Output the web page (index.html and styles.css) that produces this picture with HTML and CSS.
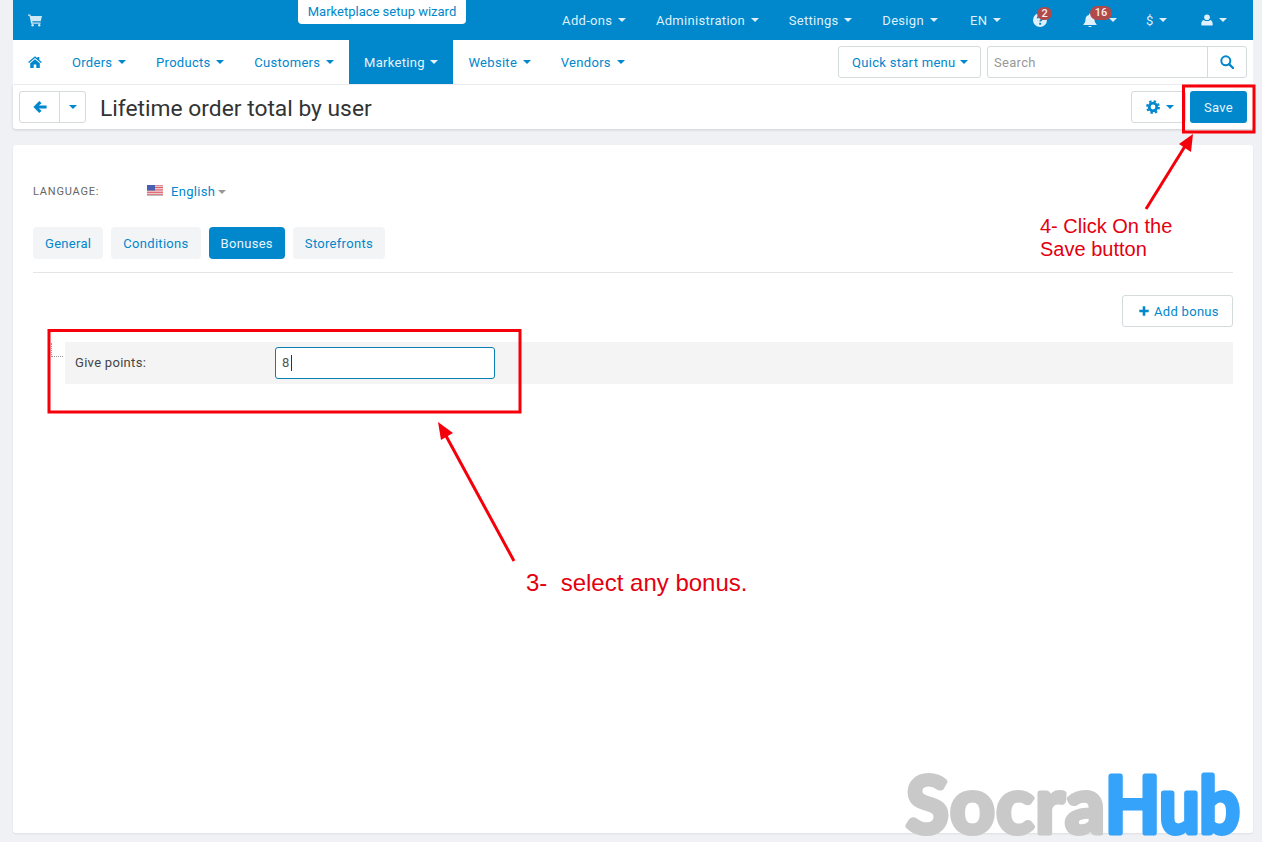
FILE: index.html
```html
<!DOCTYPE html>
<html lang="en">
<head>
<meta charset="utf-8">
<title>Lifetime order total by user</title>
<link rel="stylesheet" href="styles.css">
</head>
<body>
<div class="shell">
  <header class="topbar">
    <a class="top-item cart"><svg class="ico" viewBox="0 0 14 14"><path d="M0 1.500h2.400l.4 1.400H14l-1.300 5.400H4.300l.3 1.200h8v1.200H3.200L1.500 2.700H0z"/><circle cx="4.600" cy="12.200" r="1.200"/><circle cx="11.200" cy="12.200" r="1.200"/></svg></a>
    <a class="wizard">Marketplace setup wizard</a>
    <nav class="top-right">
      <a class="top-item">Add-ons<i class="caret"></i></a>
      <a class="top-item">Administration<i class="caret"></i></a>
      <a class="top-item">Settings<i class="caret"></i></a>
      <a class="top-item">Design<i class="caret"></i></a>
      <a class="top-item locale">EN<i class="caret"></i></a>
      <a class="top-item help"><svg class="ico" viewBox="0 0 14 14"><circle cx="7" cy="7" r="7"/><path d="M4.600 5.400C4.800 3.900 5.800 3.200 7.100 3.200c1.400 0 2.400.8 2.400 2 0 1.900-2.300 1.800-2.300 3.400" fill="none" stroke="#0087cc" stroke-width="1.700"/><rect x="6.200" y="9.800" width="2" height="1.900" fill="#0087cc"/></svg><span class="badge one">2</span></a>
      <a class="top-item bell"><svg class="ico" viewBox="0 0 14 14"><path d="M7 .5c.6 0 1 .4 1 1v.4c2.300.5 3.500 2.200 3.500 4.400 0 2.900 1 3.900 2 4.900v.8H.5v-.8c1-1 2-2 2-4.900C2.500 4.100 3.700 2.400 6 1.900v-.4c0-.6.4-1 1-1z"/><path d="M5.300 13h3.400c0 .8-.8 1.200-1.700 1.200S5.300 13.800 5.300 13z"/></svg><i class="caret"></i><span class="badge two">16</span></a>
      <a class="top-item">$<i class="caret"></i></a>
      <a class="top-item user"><svg class="ico" viewBox="0 0 14 14"><circle cx="7" cy="3.800" r="3.300"/><path d="M1.500 13.500c-.8 0-1.200-.5-1.200-1.300 0-3 1-5 3-5.300C4.200 7.900 5.500 8.300 7 8.300s2.800-.4 3.700-1.400c2 .3 3 2.300 3 5.300 0 .8-.4 1.300-1.200 1.300z"/></svg><i class="caret"></i></a>
    </nav>
  </header>

  <nav class="mainnav">
    <a class="nav-item"><svg class="ico" viewBox="0 0 14 14"><path d="M7 1.300 .2 7l.8 1L7 3l6 5 .8-1L11.300 4.900V2H9.400v1.300z"/><path d="M2.200 8.200V13h3.500V9.400h2.600V13h3.500V8.200L7 4.200z"/></svg></a>
    <a class="nav-item">Orders<i class="caret"></i></a>
    <a class="nav-item">Products<i class="caret"></i></a>
    <a class="nav-item">Customers<i class="caret"></i></a>
    <a class="nav-item active">Marketing<i class="caret"></i></a>
    <a class="nav-item">Website<i class="caret"></i></a>
    <a class="nav-item">Vendors<i class="caret"></i></a>
    <a class="btn quick">Quick start menu<i class="caret tight"></i></a>
    <div class="search">
      <span class="search-field">Search</span>
      <span class="search-btn"><svg class="ico" viewBox="0 0 14 14"><circle cx="5.800" cy="5.800" r="4.500" fill="none" stroke="#0087cc" stroke-width="2"/><path d="M9 9l4 4" stroke="#0087cc" stroke-width="2.400" stroke-linecap="round"/></svg></span>
    </div>
  </nav>

  <section class="pagehead">
    <div class="backgroup">
      <a class="back"><svg class="ico" viewBox="0 0 14 14"><path d="M.4 7 6.300.9 8.600 3.200 5.800 5.600h7.800v2.800H5.800l2.800 2.400-2.300 2.300z"/></svg></a>
      <a class="back-more"><i class="caret"></i></a>
    </div>
    <h1>Lifetime order total by user</h1>
    <a class="btn gear"><svg class="ico" viewBox="0 0 14 14"><circle cx="7" cy="7" r="3.800" fill="none" stroke="#0087cc" stroke-width="2.800"/><circle cx="7" cy="7" r="5.900" fill="none" stroke="#0087cc" stroke-width="2" stroke-dasharray="2.400 2.233"/></svg><i class="caret"></i></a>
    <a class="btn-save">Save</a>
  </section>

  <main class="card">
    <div class="lang">
      <span class="lang-label">LANGUAGE:</span>
      <svg class="flag" viewBox="0 0 16 11"><rect width="16" height="11" fill="#f3f3f6"/><path d="M0 .8h16M0 2.500h16M0 4.200h16M0 5.900h16M0 7.600h16M0 9.300h16" stroke="#d8505a" stroke-width=".9"/><rect width="8" height="5.500" fill="#4a5fb0"/><rect y="10.400" width="16" height=".6" fill="#999"/></svg>
      <a class="lang-name">English<i class="caret grey"></i></a>
    </div>
    <div class="tabs">
      <a class="tab">General</a>
      <a class="tab">Conditions</a>
      <a class="tab on">Bonuses</a>
      <a class="tab">Storefronts</a>
    </div>
    <div class="toolbar"><a class="btn add"><svg class="ico" viewBox="0 0 14 14"><path d="M5.500 1.500h3v4h4v3h-4v4h-3v-4h-4v-3h4z"/></svg>Add bonus</a></div>
    <div class="tree">
      <div class="bonus-row">
        <label class="bonus-label">Give points:</label>
        <div class="bonus-input">8<span class="text-caret"></span></div>
      </div>
    </div>
  </main>
</div>

<svg class="overlay" viewBox="0 0 1262 842">
  <g class="marks">
    <rect x="1183.500" y="86" width="70.500" height="46"/>
    <rect x="49" y="330.500" width="471" height="81.500"/>
    <path d="M1146 209 1187 143"/>
    <path d="M514 561 445 434"/>
  </g>
  <path class="head" d="M1193 134 1191 152 1179 144z"/>
  <path class="head" d="M438 422 453 433 441 440z"/>
  <text class="note" x="1040" y="233">4- Click On the</text>
  <text class="note" x="1040" y="256">Save button</text>
  <text class="note big" x="526" y="591">3-  select any bonus.</text>
  <text class="mark mark-a" x="906" y="833">Socra</text>
  <text class="mark mark-b" transform="translate(1105 833) scale(.92 1)">Hub</text>
</svg>
</body>
</html>
```

FILE: styles.css
```css
* { box-sizing: border-box; }
html, body { margin: 0; height: 842px; overflow: hidden; }
body {
  background: #eff1f4;
  font-family: Roboto, "Liberation Sans", sans-serif;
  font-size: 13px;
  letter-spacing: .3px;
  color: #333;
  position: relative;
}
a { color: #0087cc; text-decoration: none; white-space: nowrap; }
.shell { margin: 0 9px 0 13px; display: flex; flex-direction: column; }
.ico { width: 14px; height: 14px; fill: currentColor; display: block; flex: none; }
.caret {
  display: inline-block;
  width: 0; height: 0;
  margin-left: 5.7px;
  border: 4px solid transparent;
  border-top-color: currentColor;
  border-bottom-width: 0;
  vertical-align: 2px;
}
.caret.tight { margin-left: 4px; }
.caret.grey { color: #999; margin-left: 3px; }

.topbar { height: 40px; background: #0087cc; display: flex; align-items: center; position: relative; }
.top-item { color: #dff0fa; padding: 0 15px; display: flex; align-items: center; position: relative; height: 40px; }
.top-item.cart { color: #cfe8f6; }
.wizard {
  position: absolute; left: 285px; top: 0;
  width: 168px; height: 24px;
  background: #fff; border-radius: 0 0 4px 4px;
  text-align: center; line-height: 23px; letter-spacing: 0;
}
.top-right { margin-left: auto; display: flex; padding-right: 11px; }
.locale { padding-left: 17.5px; }
.help { padding: 0 17px 0 17px; }
.bell { padding: 0 14px 0 19px; }
.bell .caret { margin-left: 12px; }
.user { padding-left: 19px; }
.user .ico { width: 12px; }
.badge {
  position: absolute;
  background: #b04a4a; color: #f8eeee;
  font-size: 11px; font-weight: 500; line-height: 13px; height: 13px;
  border-radius: 7px; text-align: center; letter-spacing: 0;
}
.badge.one { left: 21px; top: 7px; width: 15px; }
.badge.two { left: 26px; top: 6px; width: 22px; height: 14px; line-height: 14px; }

.mainnav { height: 44px; background: #fff; display: flex; align-items: center; }
.nav-item { height: 44px; padding: 0 15px; display: flex; align-items: center; }
.nav-item.active { background: #0087cc; color: #e6f4fb; }
.btn {
  display: flex; align-items: center; background: #fff;
  border: 1px solid #d5dadd; border-radius: 3px; height: 32px;
}
.quick { margin-left: auto; padding: 0 13px; width: 143px; }
.search {
  margin: 0 6px; width: 260px; height: 32px; display: flex;
  border: 1px solid #d5dadd; border-radius: 3px; background: #fff;
}
.search-field { flex: 1; color: #999; padding: 1px 0 0 6px; line-height: 30px; }
.search-btn { width: 39px; border-left: 1px solid #d5dadd; display: flex; align-items: center; justify-content: center; }

.pagehead {
  margin-top: 1px; height: 44px; background: #fff;
  border-radius: 0 0 3px 3px;
  box-shadow: 0 1px 3px rgba(0,0,0,.14);
  display: flex; align-items: center; padding: 0 6px;
}
.backgroup { display: flex; height: 32px; border: 1px solid #d5dadd; border-radius: 3px; width: 67px; }
.back { width: 40px; display: flex; align-items: center; justify-content: center; border-right: 1px solid #d5dadd; }
.back-more { flex: 1; display: flex; align-items: center; justify-content: center; }
.back-more .caret { margin: 0; }
h1 { margin: 0 0 0 14px; padding-top: 2px; font-size: 22.8px; font-weight: 400; color: #333; letter-spacing: 0; flex: 1; }
.gear { width: 55px; padding-left: 14px; }
.btn-save {
  margin-left: 4px; width: 57px; height: 32px; background: #0087cc; color: #e8f5fc;
  border-radius: 3px; text-align: center; line-height: 33px;
}

.card {
  margin-top: 16px; height: 688px; background: #fff; border-radius: 3px;
  box-shadow: 0 1px 2px rgba(0,0,0,.08);
  padding: 36px 20px 0;
}
.lang { display: flex; align-items: center; height: 20px; }
.lang-label { font-size: 11px; color: #666; width: 114px; letter-spacing: .8px; }
.flag { width: 16px; height: 11px; margin-right: 8px; margin-top: -2px; }
.tabs { display: flex; gap: 8px; margin-top: 26px; padding-bottom: 13px; border-bottom: 1px solid #e3e6e8; }
.tab { height: 32px; line-height: 33px; padding: 0 12px; background: #f3f4f5; border-radius: 4px; }
.tab.on { background: #0087cc; color: #e8f5fc; }
.toolbar { display: flex; justify-content: flex-end; margin-top: 22px; }
.add { width: 111px; padding-left: 15px; gap: 4px; }
.add .ico { width: 12px; height: 12px; }
.tree { margin: 15px 0 0 32px; }
.bonus-row { height: 42px; background: #f4f4f5; display: flex; align-items: center; padding-left: 10px; position: relative; }
.bonus-row::before {
  content: ""; position: absolute; left: -14px; top: 1px; width: 11px; height: 13px;
  border-left: 1px dotted #999; border-bottom: 1px dotted #999;
}
.bonus-label { width: 200px; color: #444; padding-bottom: 2px; }
.bonus-input {
  width: 220px; height: 32px; background: #fff; border: 1px solid #0a7fb5; border-radius: 3px;
  padding-left: 6px; line-height: 30px; color: #555; display: flex; align-items: center;
}
.text-caret { width: 1px; height: 16px; background: #333; margin-left: 1px; }

.overlay { position: absolute; left: 0; top: 0; width: 1262px; height: 842px; pointer-events: none; }
.marks { fill: none; stroke: #f5000a; stroke-width: 3; }
.head { fill: #f5000a; }
.note { font-family: "Liberation Sans", sans-serif; font-size: 20px; fill: #e3000f; letter-spacing: 0; white-space: pre; }
.note.big { font-size: 24px; }
.mark {
  font-family: Lato, sans-serif; font-weight: 700; font-size: 78px;
  stroke-width: 5px; stroke-linejoin: round;
}
.mark-a { fill: #c9c9c9; stroke: #c9c9c9; letter-spacing: 1.4px; }
.mark-b { fill: #35a3fa; stroke: #35a3fa; letter-spacing: -.5px; }
```
